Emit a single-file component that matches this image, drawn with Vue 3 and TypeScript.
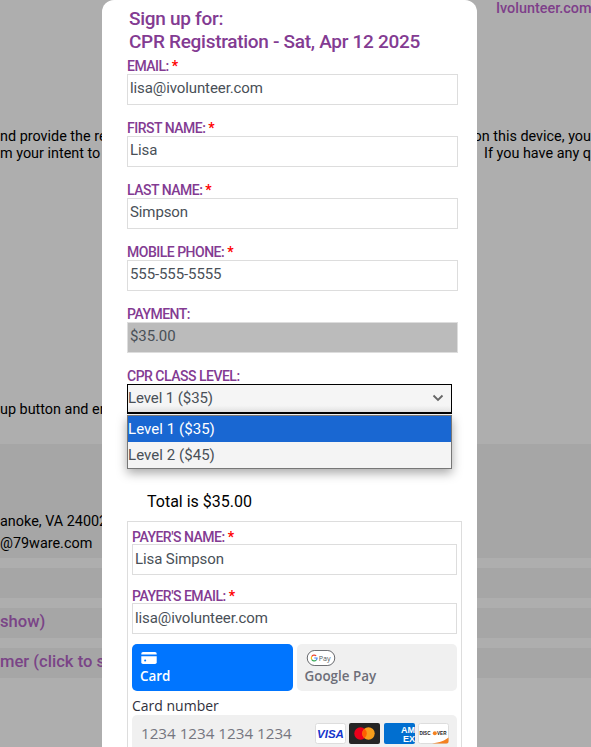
<script setup lang="ts">
interface Field { label: string; value: string; required: boolean; disabled?: boolean }
const fields: Field[] = [
  { label: 'EMAIL:', value: 'lisa@ivolunteer.com', required: true },
  { label: 'FIRST NAME:', value: 'Lisa', required: true },
  { label: 'LAST NAME:', value: 'Simpson', required: true },
  { label: 'MOBILE PHONE:', value: '555-555-5555', required: true },
  { label: 'PAYMENT:', value: '$35.00', required: false, disabled: true },
]
const payer: Field[] = [
  { label: "PAYER'S NAME:", value: 'Lisa Simpson', required: true },
  { label: "PAYER'S EMAIL:", value: 'lisa@ivolunteer.com', required: true },
]
</script>

<template>
  <div class="page">
    <div class="backdrop">
      <div class="brand">Ivolunteer.com</div>
      <div class="line first"><span>nd provide the re</span><span class="tail">on this device, you</span></div>
      <div class="line"><span>m your intent to</span><span class="tail">If you have any q</span></div>
      <div class="line third">up button and er</div>
      <div class="band address">
        <div class="line">anoke, VA 24002</div>
        <div class="line mail">@79ware.com</div>
      </div>
      <div class="band bar"></div>
      <div class="band bar link">show)</div>
      <div class="band bar link">mer (click to s</div>
    </div>

    <div class="modal">
      <h1 class="title">Sign up for:<br />CPR Registration - Sat, Apr 12 2025</h1>

      <div v-for="f in fields" :key="f.label" class="field">
        <div class="label">{{ f.label }} <span v-if="f.required" class="req">*</span></div>
        <div class="input" :class="{ disabled: f.disabled }">{{ f.value }}</div>
      </div>

      <div class="select-wrap">
        <div class="label">CPR CLASS LEVEL:</div>
        <div class="select">
          <span>Level 1 ($35)</span>
          <svg width="12" height="8" viewBox="0 0 12 8"><path d="M1.5 1.5 6 6l4.5-4.5" fill="none" stroke="#666" stroke-width="1.8" /></svg>
        </div>
        <div class="menu">
          <div class="option selected">Level 1 ($35)</div>
          <div class="option">Level 2 ($45)</div>
        </div>
      </div>

      <div class="total">Total is $35.00</div>

      <div class="payer">
        <div v-for="f in payer" :key="f.label" class="field inner">
          <div class="label">{{ f.label }} <span class="req">*</span></div>
          <div class="input">{{ f.value }}</div>
        </div>

        <div class="tabs">
          <div class="tab active">
            <svg class="card-icon" width="18" height="14" viewBox="0 0 18 14">
              <path fill="#fff" d="M2 0h14a2 2 0 0 1 2 2v1H0V2a2 2 0 0 1 2-2Z" />
              <path fill="#fff" d="M0 5h18v7a2 2 0 0 1-2 2H2a2 2 0 0 1-2-2Z" />
              <circle cx="4.5" cy="10" r="1.2" fill="#0075ff" />
            </svg>
            <span>Card</span>
          </div>
          <div class="tab">
            <svg width="32" height="18" viewBox="0 0 32 18">
              <rect x=".5" y=".5" width="31" height="17" rx="8.5" fill="#fff" stroke="#55575b" />
              <path d="M10.6 6.6A3.4 3.4 0 0 0 5.5 7.4" fill="none" stroke="#ea4335" stroke-width="1.3" />
              <path d="M5.5 7.4a3.4 3.4 0 0 0 0 3.2" fill="none" stroke="#fbbc04" stroke-width="1.3" />
              <path d="M5.5 10.6a3.4 3.4 0 0 0 5.2.8" fill="none" stroke="#34a853" stroke-width="1.3" />
              <path d="M10.7 11.4A3.4 3.4 0 0 0 11.6 9H8.4" fill="none" stroke="#4285f4" stroke-width="1.3" />
              <text x="13.5" y="12.5" class="gp">Pay</text>
            </svg>
            <span>Google Pay</span>
          </div>
        </div>

        <div class="card-label">Card number</div>
        <div class="card-field">
          <span class="placeholder">1234 1234 1234 1234</span>
          <div class="brands">
            <svg class="brand-icon" viewBox="0 0 31 21">
              <rect x=".5" y=".5" width="30" height="20" rx="2" fill="#fff" stroke="#ddd" />
              <text x="15.5" y="15" text-anchor="middle" class="visa">VISA</text>
            </svg>
            <svg class="brand-icon" viewBox="0 0 31 21">
              <rect width="31" height="21" rx="2" fill="#252525" />
              <circle cx="11.5" cy="10.5" r="6.2" fill="#eb001b" />
              <circle cx="19.5" cy="10.5" r="6.2" fill="#f79e1b" />
              <path d="M15.5 5.7a6.2 6.2 0 0 1 0 9.6 6.2 6.2 0 0 1 0-9.6Z" fill="#ff5f00" />
            </svg>
            <svg class="brand-icon" viewBox="0 0 31 21">
              <rect width="31" height="21" rx="2" fill="#016fd0" />
              <text x="31" y="10" text-anchor="end" class="amex">AM</text>
              <text x="31" y="18.5" text-anchor="end" class="amex">EX</text>
            </svg>
            <svg class="brand-icon" viewBox="0 0 31 21">
              <rect x=".5" y=".5" width="30" height="20" rx="2" fill="#fff" stroke="#ddd" />
              <path d="M30.5 14.5v4a2 2 0 0 1-2 2H14c8-1 13-3 16.5-6Z" fill="#f48120" />
              <text x="1.5" y="12" class="disc">DISC</text>
              <circle cx="16.8" cy="10.3" r="2" fill="#f48120" />
              <text x="19" y="12" class="disc">VER</text>
            </svg>
          </div>
        </div>
      </div>
    </div>
  </div>
</template>

<style scoped>
.page {
  position: relative;
  width: 591px;
  height: 747px;
  overflow: hidden;
  background: #aeaeae;
  font-family: Roboto, sans-serif;
  color: #000;
}
.backdrop {
  display: flex;
  flex-direction: column;
  font-size: 14.4px;
  line-height: 17px;
}
.brand {
  height: 17px;
  padding-left: 496px;
  color: #7e3f8a;
  font-size: 14.4px;
  font-weight: 500;
}
.line {
  display: flex;
  justify-content: space-between;
  white-space: nowrap;
  height: 17px;
}
.tail { flex: none; }
.first { margin-top: 111px; }
.third { margin-top: 239px; }
.band { background: #a6a6a6; }
.address {
  margin-top: 26px;
  height: 114px;
  padding-top: 69px;
  box-sizing: border-box;
}
.mail { margin-top: 5px; }
.bar {
  height: 30px;
  margin-top: 10px;
  line-height: 28px;
}
.link {
  color: #7a4487;
  font-size: 16.6px;
  font-weight: 500;
  white-space: nowrap;
}
.modal {
  position: absolute;
  left: 102px;
  top: 0;
  width: 375px;
  height: 747px;
  box-sizing: border-box;
  padding: 7px 0 0 25px;
  background: #fff;
  border-radius: 12px 12px 0 0;
}
.title {
  margin: 0 0 6px 2px;
  font-size: 19px;
  letter-spacing: -.29px;
  line-height: 23px;
  font-weight: 500;
  color: #833b92;
}
.field { width: 331px; height: 62px; }
.label {
  height: 15px;
  font-size: 14px;
  letter-spacing: -.5px;
  line-height: 15px;
  font-weight: 500;
  color: #833b92;
  white-space: nowrap;
}
.req { color: #f00; font-weight: 700; }
.input {
  box-sizing: border-box;
  width: 100%;
  height: 31px;
  padding: 0 2px;
  border: 1px solid #ddd;
  background: #fff;
  color: #495057;
  font-size: 15px;
  line-height: 27px;
  letter-spacing: -.1px;
}
.input.disabled { background: #bbb; }
.select-wrap {
  position: relative;
  width: 331px;
}
.select {
  box-sizing: border-box;
  width: 325px;
  height: 30px;
  padding: 0 7px 1px 0;
  border: 1px solid #000;
  border-bottom-width: 2px;
  display: flex;
  align-items: center;
  justify-content: space-between;
  background: linear-gradient(#f5f5f5 75%, #e6e6e6);
  color: #495057;
  font-size: 15px;
  letter-spacing: -.1px;
}
.menu {
  position: absolute;
  left: 0;
  top: 46px;
  width: 325px;
  box-sizing: border-box;
  border: 1px solid #777;
  background: #f4f4f4;
  box-shadow: 0 4px 10px rgba(0, 0, 0, .35);
  z-index: 2;
}
.option {
  height: 26px;
  line-height: 26px;
  font-size: 15px;
  letter-spacing: .05px;
  color: #495057;
}
.option.selected { background: #1967d2; color: #fff; }
.total {
  margin: 78px 0 0 20px;
  height: 19px;
  font-size: 16px;
  line-height: 19px;
  white-space: nowrap;
}
.payer {
  box-sizing: border-box;
  width: 335px;
  height: 300px;
  margin-top: 10px;
  padding: 8px 4px 0 4px;
  border: 1px solid #ddd;
}
.field.inner { width: 325px; height: 59px; margin: 0; }
.inner .label { height: 14px; }
.inner .input { line-height: 29px; }
.tabs {
  display: flex;
  gap: 4px;
  margin-top: -4px;
  width: 325px;
  font-family: "Open Sans", sans-serif;
}
.tab {
  flex: 1;
  box-sizing: border-box;
  height: 47px;
  padding: 6px 8px;
  border-radius: 5px;
  background: #f0f0f0;
  color: #6d6e78;
  font-size: 13.4px;
  font-weight: 600;
  line-height: 18px;
  display: flex;
  flex-direction: column;
  align-items: flex-start;
}
.tab span { margin-top: 1px; }
.card-icon { margin: 2px 0; }
.tab.active { background: #0075ff; color: #fff; }
.card-label {
  margin-top: 5px;
  height: 19px;
  font-family: "Open Sans", sans-serif;
  font-size: 14px;
  line-height: 19px;
  color: #30313d;
}
.card-field {
  display: flex;
  align-items: center;
  justify-content: space-between;
  box-sizing: border-box;
  width: 325px;
  height: 36px;
  padding: 0 8px 0 9px;
  border-radius: 5px 5px 0 0;
  background: #f0f0f0;
  font-family: "Open Sans", sans-serif;
}
.placeholder { font-size: 15.2px; color: #757680; white-space: nowrap; }
.brands { display: flex; gap: 3.33px; }
.brand-icon { width: 31px; height: 21px; display: block; }
.gp { font: 500 8px "Open Sans", sans-serif; fill: #55575b; }
.visa { font: italic 700 11.5px "Liberation Sans", sans-serif; fill: #1434cb; }
.amex { font: 700 9px "Liberation Sans", sans-serif; fill: #fff; }
.disc { font: 700 4.6px "Liberation Sans", sans-serif; fill: #222; }
</style>

<style>
html, body { margin: 0; overflow: hidden; }
</style>
